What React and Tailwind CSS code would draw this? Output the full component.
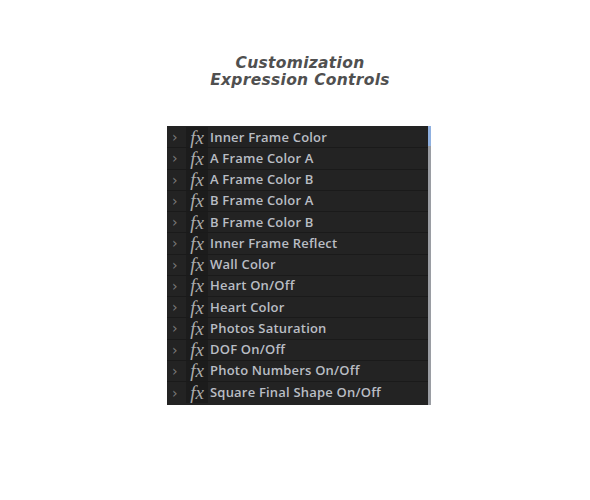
import React from "react"

const effects = [
  "Inner Frame Color",
  "A Frame Color A",
  "A Frame Color B",
  "B Frame Color A",
  "B Frame Color B",
  "Inner Frame Reflect",
  "Wall Color",
  "Heart On/Off",
  "Heart Color",
  "Photos Saturation",
  "DOF On/Off",
  "Photo Numbers On/Off",
  "Square Final Shape On/Off",
]

const EffectRow = ({ name }) => (
  <div className="flex items-center h-[21.25px] border-b border-[#1a1a1a] last:border-b-0">
    <span className="w-[19px] pl-[5px] text-[14px] text-[#7a7a7a] font-['DejaVu_Sans',sans-serif] leading-none">
      ›
    </span>
    <span className="w-[22px] h-full flex items-center justify-center bg-[#1c1c1c] text-[19px] italic text-[#ababab] font-['Liberation_Serif',serif] leading-none">
      fx
    </span>
    <span className="pl-[2px] text-[13px] font-semibold tracking-[0.2px] text-[#b9bdc4] font-['Open_Sans',sans-serif] leading-none">
      {name}
    </span>
  </div>
)

const App = () => {
  return (
    <div className="w-[590px] h-[500px] bg-white flex flex-col items-center">
      <div className="mt-[55px] text-center text-[15.5px] leading-[16.5px] font-bold italic text-[#505050] tracking-[0.3px] font-['DejaVu_Sans',sans-serif] ml-[10px]">
        <div>Customization</div>
        <div>Expression Controls</div>
      </div>

      <div className="mt-[38px] w-[264px] flex bg-[#232323] ml-[8px]">
        <div className="flex-1 flex flex-col pt-[1px] pb-[2px]">
          {effects.map((e) => (
            <EffectRow key={e} name={e} />
          ))}
        </div>
        <div className="w-[3px] flex flex-col">
          <div className="h-[20px] bg-[#8fb0e0]" />
          <div className="flex-1 bg-[#9a9da3]" />
        </div>
      </div>
    </div>
  )
}

export default App
